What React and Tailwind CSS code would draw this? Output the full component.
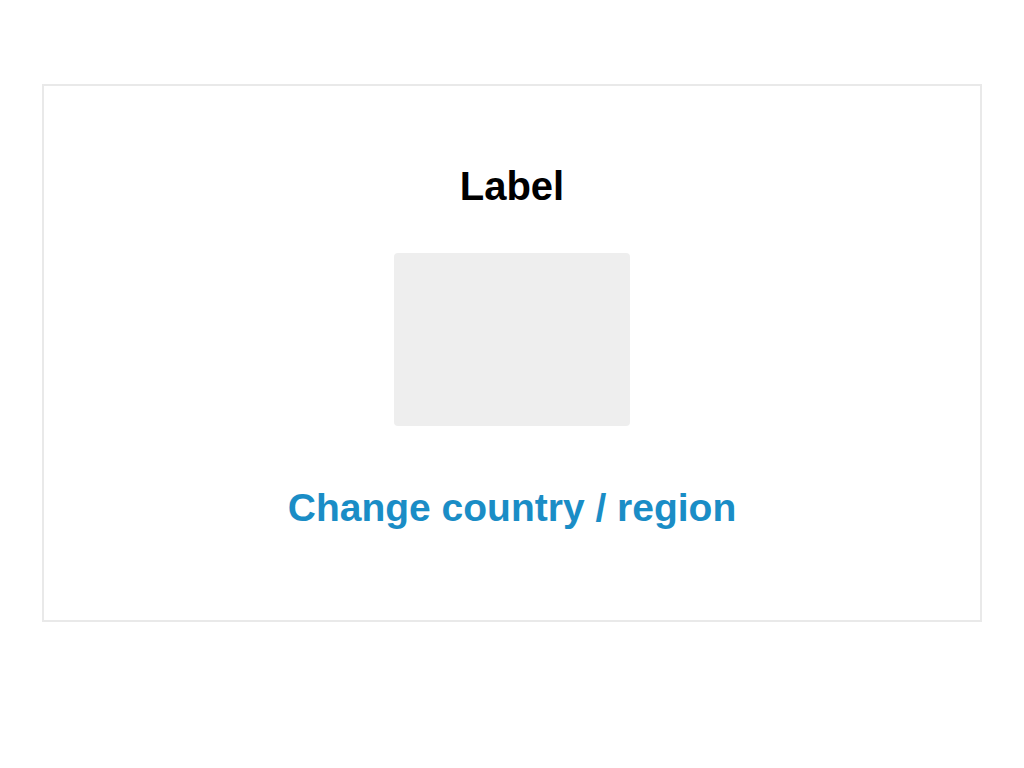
export default function App() {
  return (
    <div className="min-h-[768px] bg-white pt-[84px] font-['Liberation_Sans',Arial,sans-serif]">
      <div className="mx-[42px] flex h-[538px] flex-col items-center border-2 border-[#e9e9e9] pt-[80px]">
        <h2 className="text-[40px] leading-none font-bold text-black">Label</h2>
        <div className="mt-[47px] h-[173px] w-[236px] rounded-[4px] bg-[#eeeeee]" />
        <a href="#" className="mt-[62px] text-[39px] leading-none font-bold text-[#1a8dc6]">
          Change country / region
        </a>
      </div>
    </div>
  )
}
